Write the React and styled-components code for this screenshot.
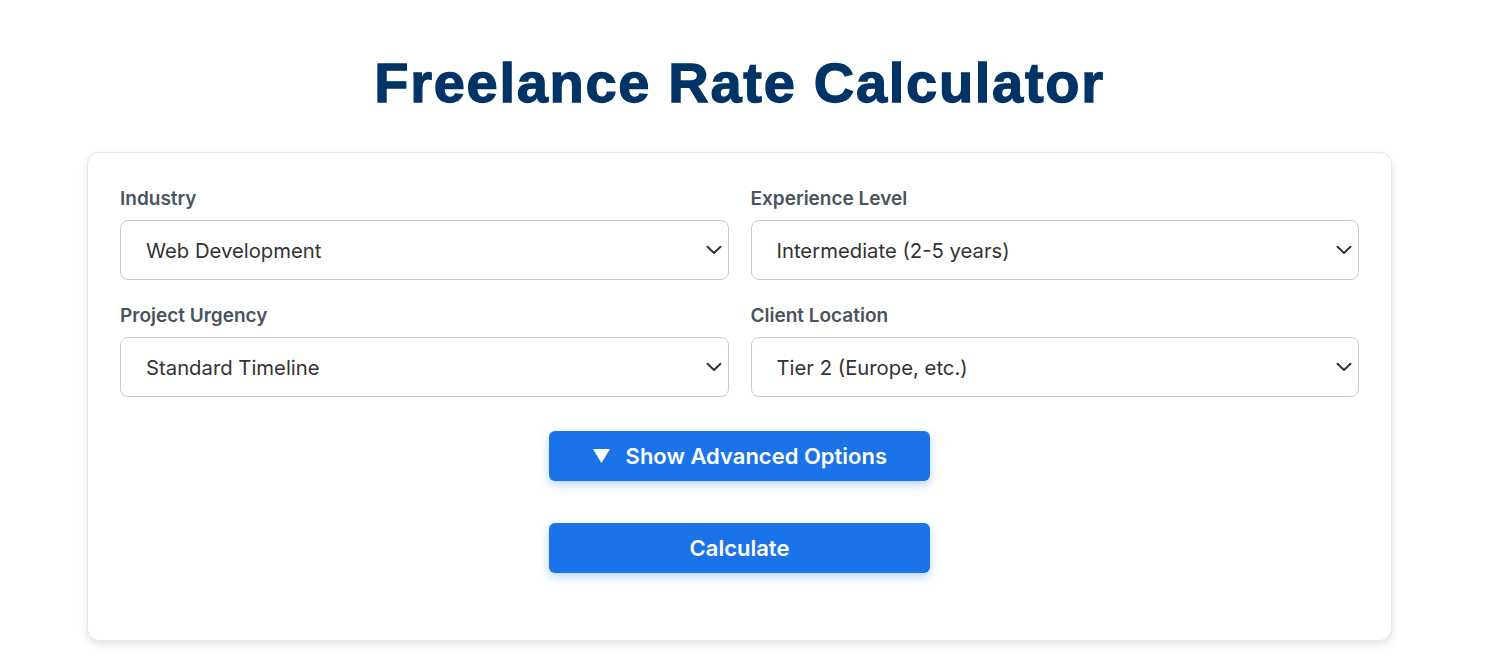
import React, { useState } from 'react'
import styled, { createGlobalStyle } from 'styled-components'

const Global = createGlobalStyle`
  body {
    margin: 0;
    background: #fff;
    font-family: Inter, "Noto Sans", sans-serif;
  }
`

const Page = styled.div`
  padding: 0 95px 20px 87px;
`

const Title = styled.h1`
  margin: 50px 0 36px;
  text-align: center;
  font-family: "Liberation Sans", Arial, sans-serif;
  font-weight: 700;
  font-size: 56px;
  line-height: 66px;
  letter-spacing: 1.7px;
  -webkit-text-stroke: 1.3px #003366;
  color: #003366;
`

const Card = styled.section`
  background: #fff;
  border: 1px solid #e6e6e6;
  border-radius: 12px;
  box-shadow: 0 4px 8px rgba(0, 0, 0, 0.1);
  padding: 33px 32px 67px;
`

const Grid = styled.div`
  display: grid;
  grid-template-columns: 1fr 1fr;
  column-gap: 22px;
  row-gap: 23px;
`

const Field = styled.div`
  display: flex;
  flex-direction: column;
`

const Label = styled.label`
  font-size: 19px;
  font-weight: 600;
  color: #4a5360;
  line-height: 26px;
  margin-bottom: 8px;
`

const SelectWrap = styled.div`
  position: relative;

  svg {
    position: absolute;
    right: 7px;
    top: 50%;
    transform: translateY(-50%);
    pointer-events: none;
  }
`

const Select = styled.select`
  appearance: none;
  width: 100%;
  height: 60px;
  padding: 0 36px 0 25px;
  font-family: Inter, "Noto Sans", sans-serif;
  font-size: 20.3px;
  color: #333;
  background: #fff;
  border: 1px solid #cccccc;
  border-radius: 8px;
`

const Actions = styled.div`
  display: flex;
  flex-direction: column;
  align-items: center;
  gap: 42px;
  margin-top: 34px;
`

const Button = styled.button`
  width: 381px;
  height: 50px;
  border: none;
  border-radius: 6px;
  background: #1a73e8;
  color: #fff;
  font-family: Inter, "Noto Sans", sans-serif;
  font-size: 22px;
  font-weight: 600;
  box-shadow: 0 4px 10px rgba(26, 115, 232, 0.3);
  cursor: pointer;
  display: flex;
  align-items: center;
  justify-content: center;
  gap: 15px;
`

const Arrow = styled.span`
  font-size: 18px;
`

const Chevron = () => (
  <svg width="16" height="10" viewBox="0 0 16 10" fill="none">
    <path d="M1.5 1.8 L8 8 L14.5 1.8" stroke="#333" strokeWidth="2" strokeLinecap="round" strokeLinejoin="round" />
  </svg>
)

const fields = [
  { label: 'Industry', options: ['Web Development', 'Graphic Design', 'Writing', 'Marketing'] },
  { label: 'Experience Level', options: ['Intermediate (2-5 years)', 'Beginner (0-2 years)', 'Expert (5+ years)'] },
  { label: 'Project Urgency', options: ['Standard Timeline', 'Rush', 'Flexible'] },
  { label: 'Client Location', options: ['Tier 2 (Europe, etc.)', 'Tier 1 (US, etc.)', 'Tier 3 (Asia, etc.)'] },
]

export default function App() {
  const [open, setOpen] = useState(false)
  return (
    <Page>
      <Global />
      <Title>Freelance Rate Calculator</Title>
      <Card>
        <Grid>
          {fields.map(f => (
            <Field key={f.label}>
              <Label>{f.label}</Label>
              <SelectWrap>
                <Select defaultValue={f.options[0]}>
                  {f.options.map(o => <option key={o}>{o}</option>)}
                </Select>
                <Chevron />
              </SelectWrap>
            </Field>
          ))}
        </Grid>
        <Actions>
          <Button onClick={() => setOpen(!open)}>
            <Arrow>{open ? '▲' : '▼'}</Arrow>
            <span>{open ? 'Hide' : 'Show'} Advanced Options</span>
          </Button>
          <Button>Calculate</Button>
        </Actions>
      </Card>
    </Page>
  )
}
